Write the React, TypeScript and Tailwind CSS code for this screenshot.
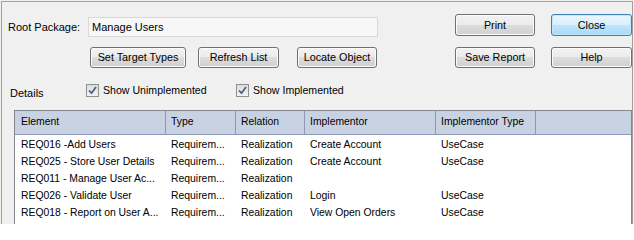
import React from "react";

const rows = [
  { element: "REQ016 -Add Users", type: "Requirem...", relation: "Realization", impl: "Create Account", implType: "UseCase" },
  { element: "REQ025 - Store User Details", type: "Requirem...", relation: "Realization", impl: "Create Account", implType: "UseCase" },
  { element: "REQ011 - Manage User Ac...", type: "Requirem...", relation: "Realization", impl: "", implType: "" },
  { element: "REQ026 - Validate User", type: "Requirem...", relation: "Realization", impl: "Login", implType: "UseCase" },
  { element: "REQ018 - Report on User A...", type: "Requirem...", relation: "Realization", impl: "View Open Orders", implType: "UseCase" },
];

const cols = [
  { label: "Element", w: "w-[151px] pl-[6px]" },
  { label: "Type", w: "w-[70px] pl-[5px]" },
  { label: "Relation", w: "w-[69px] pl-[5px]" },
  { label: "Implementor", w: "w-[131px] pl-[5px]" },
  { label: "Implementor Type", w: "w-[100px] pl-[5px]" },
];

function Button({ label, w, h = "h-[21px]", focused = false }: { label: string; w: string; h?: string; focused?: boolean }) {
  return (
    <div
      className={`${w} ${h} flex items-center justify-center rounded-[3px] border text-[10.8px] ${
        focused
          ? "border-[#3c7fb1] bg-[linear-gradient(to_bottom,#eaf6fd_0%,#d9f0fc_50%,#bee6fd_50%,#a7d9f5_100%)] shadow-[inset_0_0_0_1px_#c4e8fb]"
          : "border-[#707070] bg-[linear-gradient(to_bottom,#f2f2f2_0%,#ebebeb_50%,#dddddd_50%,#cfcfcf_100%)] shadow-[inset_0_0_0_1px_#fcfcfc]"
      }`}
    >
      {label}
    </div>
  );
}

function Checkbox() {
  return (
    <div className="w-[13px] h-[13px] border border-[#8e8f8f] bg-[linear-gradient(to_bottom,#dcdcdc,#f4f4f4)] flex items-center justify-center">
      <svg width="9" height="9" viewBox="0 0 9 9">
        <path d="M1 4.5 L3.5 7.2 L8 1" fill="none" stroke="#4a5f8a" strokeWidth="1.8" />
      </svg>
    </div>
  );
}

export default function App() {
  return (
    <div
      className="w-[634px] h-[224px] overflow-hidden bg-[#f0f0f0] pt-px pl-px text-black text-[10.4px] leading-none"
      style={{ fontFamily: '"Liberation Sans", Arial, sans-serif' }}
    >
      <div className="w-[632px] h-[260px] border border-[#a0a0a0]">
        <div className="flex pt-[12px]">
          <div className="w-[380px]">
            <div className="flex items-center mt-[3px] h-[20px]">
              <div className="w-[86px] pl-[6px] text-[11px]">Root Package:</div>
              <div className="w-[290px] h-[20px] border border-[#d9d9d9] bg-[#f7f7f7] flex items-center pl-[3px] text-[11px]">
                Manage Users
              </div>
            </div>
            <div className="flex mt-[10px] ml-[88px]">
              <Button label="Set Target Types" w="w-[96px]" />
              <div className="ml-[12px]">
                <Button label="Refresh List" w="w-[81px]" />
              </div>
              <div className="ml-[18px]">
                <Button label="Locate Object" w="w-[80px]" />
              </div>
            </div>
          </div>
          <div className="ml-[73px]">
            <div className="flex gap-[16px]">
              <Button label="Print" w="w-[80px]" h="h-[22px]" />
              <Button label="Close" w="w-[81px]" h="h-[22px]" focused />
            </div>
            <div className="flex gap-[16px] mt-[11px]">
              <Button label="Save Report" w="w-[80px]" />
              <Button label="Help" w="w-[81px]" />
            </div>
          </div>
        </div>

        <div className="flex items-start mt-[16px]">
          <div className="w-[84px] pl-[8px] mt-[4px] text-[11px]">Details</div>
          <Checkbox />
          <div className="ml-[4px] mt-[1px] w-[133px] text-[10.6px]">Show Unimplemented</div>
          <Checkbox />
          <div className="ml-[4px] mt-[1px] text-[10.6px]">Show Implemented</div>
        </div>

        <div className="ml-[12px] mt-[11px] w-[618px] h-[140px] border border-[#828790] bg-white">
          <div className="flex h-[24px] bg-[#c9d2e3] border-b border-[#8c98b6]">
            {cols.map((c) => (
              <div key={c.label} className={`${c.w} flex items-center border-r border-[#8c98b6]`}>
                {c.label}
              </div>
            ))}
          </div>
          <div className="pt-[2px]">
            {rows.map((r) => (
              <div key={r.element} className="flex h-[17px] items-center">
                <div className="w-[151px] pl-[6px] whitespace-nowrap">{r.element}</div>
                <div className="w-[70px] pl-[5px] whitespace-nowrap">{r.type}</div>
                <div className="w-[69px] pl-[5px] whitespace-nowrap">{r.relation}</div>
                <div className="w-[131px] pl-[5px] whitespace-nowrap">{r.impl}</div>
                <div className="w-[100px] pl-[5px] whitespace-nowrap">{r.implType}</div>
              </div>
            ))}
          </div>
        </div>
      </div>
    </div>
  );
}
